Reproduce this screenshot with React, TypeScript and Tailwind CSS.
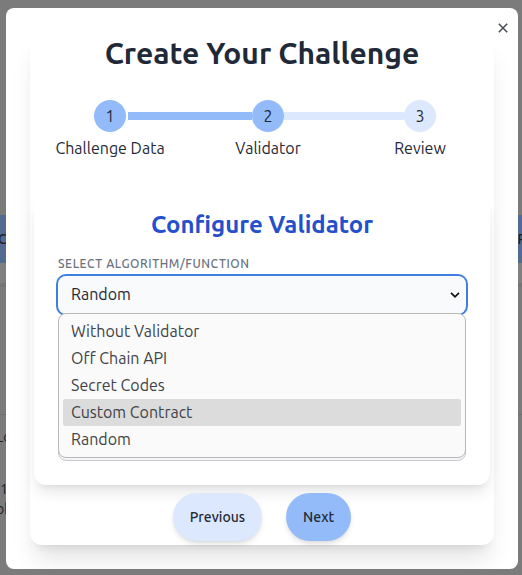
import { useState } from "react";

const algorithms = ["Without Validator", "Off Chain API", "Secret Codes", "Custom Contract", "Random"];

function PageBehind() {
  return (
    <div aria-hidden="true" className="absolute inset-0 flex flex-col overflow-hidden bg-[#7b7b7b] text-sm text-[#1b2029]">
      <div className="h-[215px] shrink-0" />
      <div className="flex h-12 shrink-0 items-center justify-between bg-[#536b93] font-medium">
        <span className="-ml-0.5">C</span>
        <span className="-mr-1">P</span>
      </div>
      <div className="h-6 shrink-0 border-b-4 border-[#757575] bg-[#808080]" />
      <div className="h-32 shrink-0 border-b border-[#6d6d6d]" />
      <div className="flex flex-col gap-8 pt-3 leading-5">
        <span className="-ml-1">Lo</span>
        <span className="leading-5">
          1
          <br />
          <span className="-ml-1">ok</span>
        </span>
      </div>
    </div>
  );
}

type StepProps = { number: number; label: string; active: boolean };

function Step({ number, label, active }: StepProps) {
  return (
    <li className="flex w-8 shrink-0 flex-col items-center">
      <span className={`flex size-8 items-center justify-center rounded-full ${active ? "bg-[#93bbfa]" : "bg-[#dbe8fe]"}`}>
        {number}
      </span>
      <span className="mt-1 whitespace-nowrap">{label}</span>
    </li>
  );
}

export default function App() {
  const [algorithm, setAlgorithm] = useState("Random");
  const highlighted = "Custom Contract";

  return (
    <div className="relative min-h-screen overflow-hidden font-['Ubuntu','Noto_Sans',sans-serif] text-[#1f2937]">
      <PageBehind />
      <div role="dialog" aria-labelledby="title" className="relative mt-2 mr-1 mb-1.5 ml-1.5 overflow-hidden rounded-lg bg-white p-6">
        <button type="button" aria-label="Close" className="absolute top-3 right-[7px] flex size-4 items-center justify-center text-[#4b4f57]">
          <svg viewBox="0 0 10 10" className="size-[10px]" fill="none" stroke="currentColor" strokeWidth="1.6">
            <path d="M.8.8l8.4 8.4M9.2.8L.8 9.2" />
          </svg>
        </button>
        <div className="rounded-xl bg-white pb-1 shadow-xl">
          <h1 id="title" className="pt-[3px] text-center text-3xl leading-9 font-semibold">Create Your Challenge</h1>
          <ol className="mt-[29px] flex items-start pr-[58px] pl-16">
            <Step number={1} label="Challenge Data" active />
            <li aria-hidden="true" className="mt-3 ml-0.5 h-2 grow-[31] basis-0 bg-[#93bbfa]" />
            <Step number={2} label="Validator" active />
            <li aria-hidden="true" className="mt-3 h-2 grow-[30] basis-0 bg-[#dbe8fe]" />
            <Step number={3} label="Review" active={false} />
          </ol>
          <section className="mx-1 mt-9 rounded-xl bg-white px-6 pt-[13px] pb-6 shadow-lg">
            <h2 className="text-center text-2xl leading-8 font-semibold text-[#2450cb]">Configure Validator</h2>
            <label htmlFor="algorithm" className="mt-[15px] block text-xs leading-4 font-medium tracking-wider text-[#6b7280] uppercase">
              Select algorithm/function
            </label>
            <div className="relative mt-1">
              <select
                id="algorithm"
                value={algorithm}
                onChange={(e) => setAlgorithm(e.target.value)}
                className="block h-[38px] w-full appearance-none rounded-lg bg-[#f9fafb] px-[13px] pb-0.5 ring-2 ring-[#3f7fe0] outline-none"
              >
                {algorithms.map((name) => (
                  <option key={name}>{name}</option>
                ))}
              </select>
              <svg viewBox="0 0 10 6" className="pointer-events-none absolute top-4 right-1.5 h-[6px] w-[10px]" fill="none" stroke="#111" strokeWidth="1.7">
                <path d="M1 .8l4 4 4-4" />
              </svg>
              <ul
                role="listbox"
                aria-label="Algorithms"
                className="absolute inset-x-0 top-[37px] rounded-lg border border-[#b8b8b8] bg-[#fafafa] p-1 text-[#3f4347]"
              >
                {algorithms.map((name) => (
                  <li
                    key={name}
                    role="option"
                    aria-selected={name === highlighted}
                    className={`rounded-xs px-2 leading-[27px] ${name === highlighted ? "bg-[#dcdcdc]" : ""}`}
                  >
                    {name}
                  </li>
                ))}
              </ul>
            </div>
            <div className="mt-4 h-[131px] rounded-lg border border-[#c8cacd] bg-[#f3f4f5]" />
          </section>
          <div className="mt-2 flex justify-center gap-6">
            <button type="button" className="h-12 rounded-3xl bg-[#dbe8fe] px-[17px] text-sm font-medium shadow-md">Previous</button>
            <button type="button" className="h-12 rounded-3xl bg-[#93bbfa] px-[17px] text-sm font-medium shadow-md">Next</button>
          </div>
        </div>
      </div>
    </div>
  );
}
